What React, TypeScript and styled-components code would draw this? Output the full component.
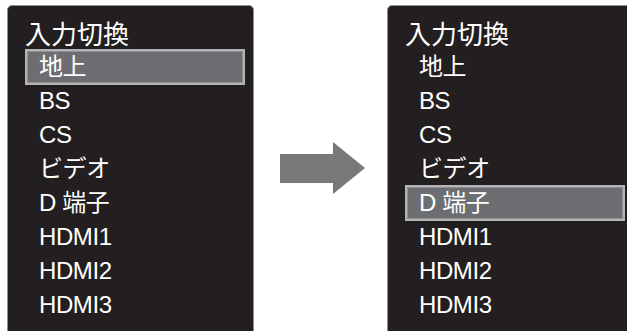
import React from "react";
import { styled, createGlobalStyle } from "styled-components";

const GlobalStyle = createGlobalStyle`
  html, body {
    margin: 0;
    padding: 0;
    background: #ffffff;
    overflow: hidden;
    height: 331px;
  }
`;

const Page = styled.div`
  display: flex;
  align-items: stretch;
  padding: 5px 0 0 7px;
  width: 627px;
  height: 331px;
  box-sizing: border-box;
  font-family: "Liberation Sans", "Noto Sans CJK JP", sans-serif;
  color: #ffffff;
`;

const Panel = styled.div`
  flex-shrink: 0;
  width: 247px;
  height: 342px;
  box-sizing: border-box;
  background: #231f20;
  border: 1px solid #8e8e8e;
  border-radius: 5px;
  padding: 14px 0 0 17px;
`;

const Title = styled.div`
  font-size: 26px;
  line-height: 30px;
  height: 30px;
  white-space: nowrap;
`;

const List = styled.ul`
  list-style: none;
  margin: 0;
  padding: 0;
`;

const Item = styled.li<{ $active?: boolean }>`
  width: 220px;
  height: 34px;
  line-height: 30px;
  box-sizing: border-box;
  padding-left: 12px;
  font-size: 24px;
  letter-spacing: -0.4px;
  white-space: nowrap;
  border: 2px solid ${(p) => (p.$active ? "#b4b4b4" : "transparent")};
  background: ${(p) => (p.$active ? "#6d6e71" : "transparent")};
  box-shadow: ${(p) => (p.$active ? "inset 0 0 0 1px #8f9093" : "none")};
  ${(p) => p.$active && "height: 36px; line-height: 32px; margin: -1px 0;"}
`;

const ArrowCell = styled.div`
  flex-shrink: 0;
  width: 133px;
  display: flex;
  align-items: center;
  justify-content: center;
  padding-left: 4px;
  box-sizing: border-box;
`;

const inputs = ["地上", "BS", "CS", "ビデオ", "D 端子", "HDMI1", "HDMI2", "HDMI3"];

const Menu: React.FC<{ active: string }> = ({ active }) => (
  <Panel>
    <Title>入力切換</Title>
    <List>
      {inputs.map((name) => (
        <Item key={name} $active={name === active}>
          {name}
        </Item>
      ))}
    </List>
  </Panel>
);

const Arrow = () => (
  <svg width="85" height="52" viewBox="0 0 85 52">
    <polygon points="0,12 53,12 53,0 85,26 53,52 53,41 0,41" fill="#787878" />
  </svg>
);

const App: React.FC = () => {
  return (
    <>
      <GlobalStyle />
      <Page>
        <Menu active="地上" />
        <ArrowCell>
          <Arrow />
        </ArrowCell>
        <Menu active="D 端子" />
      </Page>
    </>
  );
};

export default App;
